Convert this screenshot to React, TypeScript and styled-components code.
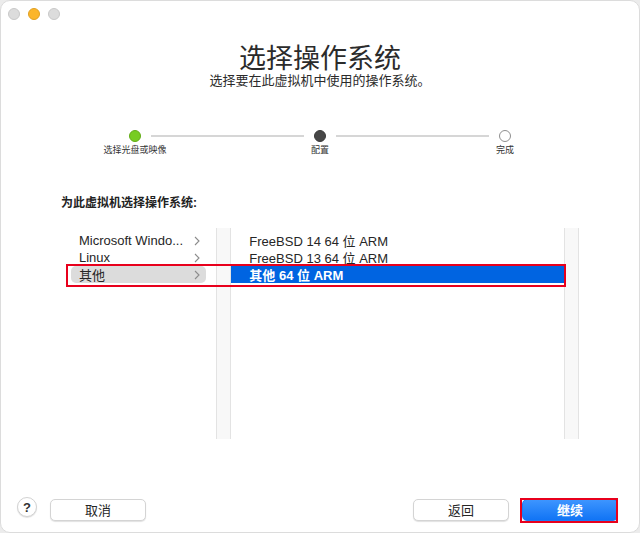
import styled, { createGlobalStyle } from 'styled-components';

const GlobalStyle = createGlobalStyle`
  html, body {
    margin: 0;
    padding: 0;
    background: #ececec;
  }
  * {
    box-sizing: border-box;
  }
`;

const FONT = `"Liberation Sans", "Noto Sans CJK SC", sans-serif`;

const Window = styled.div`
  position: relative;
  width: 640px;
  height: 533px;
  background: #ffffff;
  border-radius: 10px;
  border: 1px solid #dcdcdc;
  display: flex;
  flex-direction: column;
  font-family: ${FONT};
  color: #2a2a2a;
  overflow: hidden;
`;

const TitleBar = styled.div`
  height: 26px;
  display: flex;
  align-items: center;
  gap: 8px;
  padding-left: 7px;
`;

const Light = styled.span<{ $color: string; $border: string }>`
  width: 12px;
  height: 12px;
  border-radius: 50%;
  background: ${(p) => p.$color};
  border: 1px solid ${(p) => p.$border};
`;

const Header = styled.div`
  display: flex;
  flex-direction: column;
  align-items: center;
  margin-top: 16px;
`;

const Title = styled.h1`
  margin: 0;
  font-size: 27px;
  line-height: 32px;
  font-weight: 400;
  color: #2b2b2b;
`;

const Subtitle = styled.p`
  margin: -2px 0 0;
  font-size: 13px;
  line-height: 16px;
  color: #2b2b2b;
`;

const Stepper = styled.div`
  display: flex;
  align-items: flex-start;
  padding: 0 128px;
  margin-top: 41px;
`;

const Step = styled.div`
  width: 12px;
  display: flex;
  flex-direction: column;
  align-items: center;
`;

const Dot = styled.span<{ $state: 'done' | 'current' | 'todo' }>`
  width: 12px;
  height: 12px;
  border-radius: 50%;
  background: ${(p) =>
    p.$state === 'done' ? '#77cc22' : p.$state === 'current' ? '#474747' : '#ffffff'};
  border: 1px solid
    ${(p) => (p.$state === 'done' ? '#62ac17' : p.$state === 'current' ? '#3a3a3a' : '#8e8e8e')};
`;

const StepLabel = styled.span`
  margin-top: 3px;
  font-size: 9px;
  line-height: 11px;
  white-space: nowrap;
  color: #333;
`;

const StepLine = styled.div`
  flex: 1;
  height: 2px;
  margin: 5px 10px 0;
  background: #d6d6d6;
`;

const SectionLabel = styled.div`
  margin: 40px 0 0 60px;
  font-size: 12px;
  line-height: 14px;
  font-weight: 700;
  color: #222;
`;

const Browser = styled.div`
  display: flex;
  margin: 18px 60px 0 60px;
  height: 211px;
`;

const Column = styled.div<{ $width: number }>`
  width: ${(p) => p.$width}px;
  padding-top: 4px;
  display: flex;
  flex-direction: column;
`;

const Strip = styled.div`
  width: 15px;
  background: #f8f8f8;
  border-left: 1px solid #e3e3e3;
  border-right: 1px solid #e3e3e3;
`;

const LeftRow = styled.div<{ $selected?: boolean }>`
  height: 17px;
  margin: 0 10px 0 10px;
  padding: 0 6px 0 8px;
  display: flex;
  align-items: center;
  justify-content: space-between;
  border-radius: 5px;
  background: ${(p) => (p.$selected ? '#dcdcdc' : 'transparent')};
  font-size: 13px;
  color: #262626;
`;

const RightRow = styled.div<{ $selected?: boolean }>`
  height: 17px;
  padding-left: 18px;
  display: flex;
  align-items: center;
  font-size: 13px;
  background: ${(p) => (p.$selected ? '#0064e1' : 'transparent')};
  color: ${(p) => (p.$selected ? '#ffffff' : '#262626')};
  font-weight: ${(p) => (p.$selected ? 700 : 400)};
`;

const Spacer = styled.div`
  flex: 1;
`;

const Footer = styled.div`
  display: flex;
  align-items: center;
  padding: 0 21px 10px 16px;
`;

const HelpButton = styled.button`
  width: 20px;
  height: 20px;
  border-radius: 50%;
  border: 1px solid #d2d2d2;
  background: #fff;
  box-shadow: 0 1px 1px rgba(0, 0, 0, 0.12);
  font-family: ${FONT};
  font-size: 13px;
  font-weight: 700;
  color: #333;
  padding: 0;
  margin-right: 13px;
  margin-bottom: 5px;
  display: flex;
  align-items: center;
  justify-content: center;
`;

const Button = styled.button<{ $primary?: boolean }>`
  width: 96px;
  height: 22px;
  border-radius: 5px;
  font-family: ${FONT};
  font-size: 13px;
  padding: 0;
  border: 1px solid ${(p) => (p.$primary ? '#1a7cf5' : '#d4d4d4')};
  background: ${(p) => (p.$primary ? 'linear-gradient(#3d95ff, #1174f5)' : '#ffffff')};
  color: ${(p) => (p.$primary ? '#ffffff' : '#262626')};
  font-weight: ${(p) => (p.$primary ? 700 : 400)};
  box-shadow: 0 1px 1px rgba(0, 0, 0, 0.12);
  margin-left: ${(p) => (p.$primary ? '13px' : '0')};
`;

const Annotation = styled.div<{ $x: number; $y: number; $w: number; $h: number }>`
  position: absolute;
  left: ${(p) => p.$x - 1}px;
  top: ${(p) => p.$y - 1}px;
  width: ${(p) => p.$w}px;
  height: ${(p) => p.$h}px;
  border: 2px solid #e8001c;
  pointer-events: none;
`;

const Chevron = () => (
  <svg width="6" height="10" viewBox="0 0 6 10">
    <path d="M1 1 L5 5 L1 9" fill="none" stroke="#8c8c8c" strokeWidth="1.1" />
  </svg>
);

const families = ['Microsoft Windo...', 'Linux', '其他'];
const versions = ['FreeBSD 14 64 位 ARM', 'FreeBSD 13 64 位 ARM', '其他 64 位 ARM'];

export default function App() {
  return (
    <>
      <GlobalStyle />
      <Window>
        <TitleBar>
          <Light $color="#dcdcdc" $border="#c8c8c8" />
          <Light $color="#fbb52a" $border="#e0a022" />
          <Light $color="#dcdcdc" $border="#c8c8c8" />
        </TitleBar>
        <Header>
          <Title>选择操作系统</Title>
          <Subtitle>选择要在此虚拟机中使用的操作系统。</Subtitle>
        </Header>
        <Stepper>
          <Step>
            <Dot $state="done" />
            <StepLabel>选择光盘或映像</StepLabel>
          </Step>
          <StepLine />
          <Step>
            <Dot $state="current" />
            <StepLabel>配置</StepLabel>
          </Step>
          <StepLine />
          <Step>
            <Dot $state="todo" />
            <StepLabel>完成</StepLabel>
          </Step>
        </Stepper>
        <SectionLabel>为此虚拟机选择操作系统:</SectionLabel>
        <Browser>
          <Column $width={156}>
            {families.map((f, i) => (
              <LeftRow key={f} $selected={i === 2}>
                <span>{f}</span>
                <Chevron />
              </LeftRow>
            ))}
          </Column>
          <Strip />
          <Column $width={334}>
            {versions.map((v, i) => (
              <RightRow key={v} $selected={i === 2}>
                {v}
              </RightRow>
            ))}
          </Column>
          <Strip />
        </Browser>
        <Spacer />
        <Footer>
          <HelpButton>?</HelpButton>
          <Button>取消</Button>
          <Spacer />
          <Button>返回</Button>
          <Button $primary>继续</Button>
        </Footer>
        <Annotation $x={66} $y={264} $w={500} $h={23} />
        <Annotation $x={520} $y={498} $w={98} $h={25} />
      </Window>
    </>
  );
}
